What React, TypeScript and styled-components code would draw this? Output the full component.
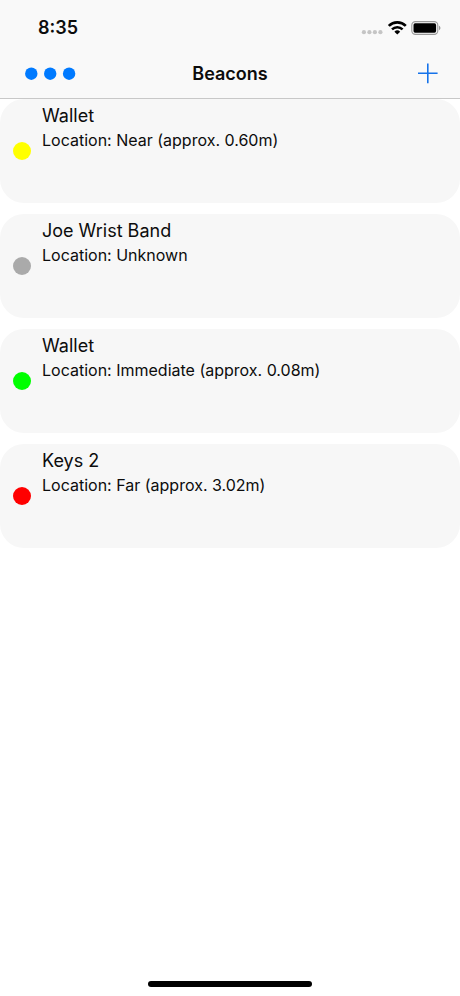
import React from "react";
import styled, { createGlobalStyle } from "styled-components";

const GlobalStyle = createGlobalStyle`
  *, *::before, *::after {
    box-sizing: border-box;
  }
  body {
    margin: 0;
    background: #ffffff;
    color: #0c0c0c;
    font-family: Inter, "Liberation Sans", sans-serif;
  }
`;

const Screen = styled.div`
  display: flex;
  flex-direction: column;
  min-height: 100vh;
`;

const TopArea = styled.header`
  background: #f9f9f9;
  border-bottom: 1px solid #c8c8c8;
`;

const StatusBar = styled.div`
  display: flex;
  align-items: center;
  justify-content: space-between;
  height: 50px;
  padding: 6px 19px 0 38px;
`;

const Clock = styled.time`
  font-size: 18px;
  line-height: 22px;
  font-weight: 600;
`;

const StatusIcons = styled.div`
  display: flex;
  align-items: center;
  gap: 4px;
`;

const NavBar = styled.nav`
  display: grid;
  grid-template-columns: 1fr auto 1fr;
  align-items: center;
  height: 48px;
  padding: 0 21px;
`;

const NavButton = styled.button<{ $side: "start" | "end" }>`
  display: flex;
  justify-self: ${({ $side }) => $side};
  padding: 4px 0;
  border: 0;
  background: none;
  color: #007aff;
  cursor: pointer;
`;

const Title = styled.h1`
  margin: 0;
  font-size: 18px;
  line-height: 24px;
  font-weight: 600;
`;

const BeaconList = styled.ul`
  display: flex;
  flex-direction: column;
  gap: 11px;
  margin: 0;
  padding: 0;
  list-style: none;
`;

const BeaconCard = styled.li`
  display: flex;
  align-items: center;
  gap: 11px;
  height: 104px;
  padding: 0 13px;
  border-radius: 24px;
  background: #f7f7f7;
`;

const Dot = styled.span<{ $color: string }>`
  flex: none;
  width: 18px;
  height: 18px;
  border-radius: 50%;
  background: ${({ $color }) => $color};
`;

const BeaconText = styled.div`
  align-self: flex-start;
  padding-top: 5px;
`;

const BeaconName = styled.h2`
  margin: 0;
  font-size: 18px;
  line-height: 24px;
  font-weight: 400;
`;

const BeaconLocation = styled.p`
  margin: 0;
  font-size: 16px;
  line-height: 24px;
`;

const HomeIndicator = styled.div`
  width: 164px;
  height: 6px;
  margin: auto auto 9px;
  border-radius: 3px;
  background: #000000;
`;

const beacons = [
  { id: 1, name: "Wallet", location: "Near (approx. 0.60m)", color: "#ffff00" },
  { id: 2, name: "Joe Wrist Band", location: "Unknown", color: "#aaaaaa" },
  { id: 3, name: "Wallet", location: "Immediate (approx. 0.08m)", color: "#00ff00" },
  { id: 4, name: "Keys 2", location: "Far (approx. 3.02m)", color: "#ff0000" },
];

const SignalIcon = () => (
  <svg width="22" height="14" viewBox="0 0 22 14" fill="#c5c5c5" aria-hidden="true">
    <circle cx="2.9" cy="11.2" r="2.1" />
    <circle cx="8.4" cy="11.2" r="2.1" />
    <circle cx="13.9" cy="11.2" r="2.1" />
    <circle cx="19.4" cy="11.2" r="2.1" />
  </svg>
);

const WifiIcon = () => (
  <svg width="20" height="14" viewBox="0 0 20 14" fill="none" stroke="#000" aria-hidden="true">
    <path d="M1.8 4.9a12.2 12.2 0 0 1 17 0" strokeWidth="2.7" />
    <path d="M5 8.3a7.6 7.6 0 0 1 10.6 0" strokeWidth="2.5" />
    <path d="M7.4 10.7a4.2 4.2 0 0 1 5.8 0L10.3 13.6z" fill="#000" stroke="none" />
  </svg>
);

const BatteryIcon = () => (
  <svg width="30" height="14" viewBox="0 0 30 14" aria-hidden="true">
    <rect x="0.8" y="0.6" width="26" height="12.8" rx="3.6" fill="none" stroke="#999" strokeWidth="1.1" />
    <rect x="2.5" y="2.3" width="22.6" height="9.4" rx="1.6" fill="#000" />
    <path d="M28 4.8c1.9.7 1.9 3.7 0 4.4z" fill="#999" />
  </svg>
);

const MoreIcon = () => (
  <svg width="58" height="14" viewBox="0 0 58 14" fill="currentColor" aria-hidden="true">
    <circle cx="10.3" cy="6.7" r="6.2" />
    <circle cx="29.2" cy="6.7" r="6.2" />
    <circle cx="48.1" cy="6.7" r="6.2" />
  </svg>
);

const PlusIcon = () => (
  <svg width="22" height="22" viewBox="0 0 22 22" fill="none" stroke="#1673ea" strokeWidth="1.6" aria-hidden="true">
    <path d="M10.8 0.4v19.8M1 10.3h19.6" />
  </svg>
);

export default function App() {
  return (
    <Screen>
      <GlobalStyle />
      <TopArea>
        <StatusBar>
          <Clock>8:35</Clock>
          <StatusIcons>
            <SignalIcon />
            <WifiIcon />
            <BatteryIcon />
          </StatusIcons>
        </StatusBar>
        <NavBar>
          <NavButton type="button" $side="start" aria-label="More">
            <MoreIcon />
          </NavButton>
          <Title>Beacons</Title>
          <NavButton type="button" $side="end" aria-label="Add beacon">
            <PlusIcon />
          </NavButton>
        </NavBar>
      </TopArea>
      <main>
        <BeaconList>
          {beacons.map((beacon) => (
            <BeaconCard key={beacon.id}>
              <Dot $color={beacon.color} />
              <BeaconText>
                <BeaconName>{beacon.name}</BeaconName>
                <BeaconLocation>Location: {beacon.location}</BeaconLocation>
              </BeaconText>
            </BeaconCard>
          ))}
        </BeaconList>
      </main>
      <HomeIndicator />
    </Screen>
  );
}
